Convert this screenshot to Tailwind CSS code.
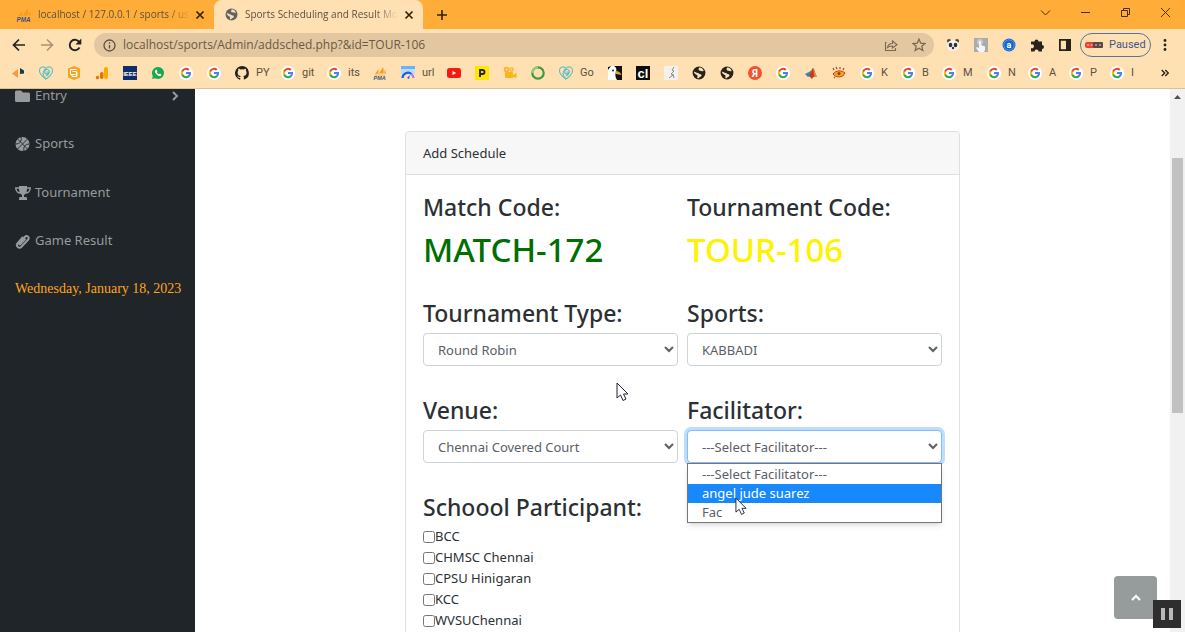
<!DOCTYPE html>
<html lang="en">
<head>
    <meta charset="UTF-8">
    <meta name="viewport" content="width=device-width, initial-scale=1.0">
    <title>Sports Scheduling and Result Monitoring</title>
    <script src="https://cdn.jsdelivr.net/npm/@tailwindcss/browser@4"></script>
</head>
<body class="flex flex-col h-screen overflow-hidden bg-white font-['Noto_Sans',sans-serif] text-[13px] text-[#2b3035]">

    <!-- Shared icons -->
    <svg class="hidden">
        <symbol id="google" viewBox="0 0 28 28">
            <circle cx="14" cy="14" r="14" fill="#fff"/>
            <g transform="translate(2.6 2.6) scale(.95)">
                <path fill="#4285f4" d="M22.6 12.2c0-.8-.1-1.5-.2-2.2H12v4.3h5.9a5 5 0 0 1-2.2 3.3v2.8h3.6c2.1-2 3.3-4.8 3.3-8.2z"/>
                <path fill="#34a853" d="M12 23c3 0 5.5-1 7.3-2.7l-3.6-2.7c-1 .7-2.2 1-3.7 1a6.5 6.5 0 0 1-6.2-4.5H2.2v2.8A11 11 0 0 0 12 23z"/>
                <path fill="#fbbc05" d="M5.8 14.1a6.6 6.6 0 0 1 0-4.2V7.1H2.2a11 11 0 0 0 0 9.9z"/>
                <path fill="#ea4335" d="M12 5.4c1.6 0 3.1.6 4.2 1.6l3.2-3.1A11 11 0 0 0 2.2 7.1l3.6 2.8A6.5 6.5 0 0 1 12 5.4z"/>
            </g>
        </symbol>
        <symbol id="globe" viewBox="0 0 24 24">
            <circle cx="12" cy="12" r="11" fill="currentColor"/>
            <path fill="#ffe0b2" d="M3 10c3-1 4 2 7 2 2 0 2 2 4 2s3 1 2 3-3 1-4 3-3 1-3 0 1-3 0-4-5-2-6-6zM12 3c3-1 6 1 8 5-2 2-4 0-6 0s-4-2-2-5z"/>
        </symbol>
        <symbol id="pma" viewBox="0 0 28 28">
            <path fill="#f89c1c" d="M12 15 20 2c1 5 2 9 1 13zM4 16 11 6v9zM22 15c2-2 1-5 0-8 3 3 4 5 4 8z"/>
            <path fill="#f5b564" d="M3 17h23l-3 2H5z"/>
            <text x="1" y="27" fill="#44507c" font-family="Liberation Sans" font-size="11" font-weight="700" font-style="italic">PMA</text>
        </symbol>
        <symbol id="heart" viewBox="0 0 28 28">
            <g fill="none" stroke="#5bbfc5" stroke-width="2.2">
                <path d="M14 26C5 20 0 14 1 8c1-7 9-8 13-3 4-5 12-4 13 3 1 6-4 12-13 18z"/>
                <path d="M14 26C5 18 7 10 14 5M14 20c8-4 9-12 3-13-5-1-8 7-3 9 4 0 5-2 5-4h-4"/>
            </g>
        </symbol>
        <symbol id="cross" viewBox="0 0 10 10">
            <path d="M1.5 1.5l7 7M8.5 1.5l-7 7" stroke="currentColor" stroke-width="1.7"/>
        </symbol>
        <symbol id="pointer" viewBox="0 0 14 20">
            <path fill="#fff" stroke="#223" d="M1 1v15l3.5-3 2.5 5.5 3-1.5-2.5-5h4.5z"/>
        </symbol>
    </svg>

    <!-- Browser window -->
    <header class="shrink-0 bg-[#ffe0b2] font-[Roboto,sans-serif] text-[11px] text-[#5c5040]">

        <!-- Tabs -->
        <div class="flex h-[29px] bg-[#ffad38]">
            <div class="flex items-center w-[214px] shrink-0 pl-4 pr-2">
                <svg class="size-4 mr-1.5 shrink-0"><use href="#pma"/></svg>
                <span class="w-[153px] mr-1 overflow-hidden whitespace-nowrap font-['Open_Sans',sans-serif] text-[10px] [mask-image:linear-gradient(to_right,#000_85%,transparent)]">localhost / 127.0.0.1 / sports / us</span>
                <button aria-label="Close tab" class="text-[#332200]"><svg class="size-2.5"><use href="#cross"/></svg></button>
            </div>
            <div class="flex items-center w-[209px] shrink-0 pl-[11px] pr-2 bg-[#ffe0b2] rounded-t-lg">
                <svg class="size-[13px] mr-[7px] shrink-0 text-[#5f6368]"><use href="#globe"/></svg>
                <span class="w-[153px] mr-1.5 overflow-hidden whitespace-nowrap font-['Open_Sans',sans-serif] text-[10px] [mask-image:linear-gradient(to_right,#000_85%,transparent)]">Sports Scheduling and Result Mo</span>
                <button aria-label="Close tab" class="text-[#332200]"><svg class="size-2.5"><use href="#cross"/></svg></button>
            </div>
            <button aria-label="New tab" class="px-[13px] text-[#332200]">
                <svg class="size-3" viewBox="0 0 12 12"><path d="M6 1v10M1 6h10" stroke="currentColor" stroke-width="1.6"/></svg>
            </button>
            <div class="flex items-center gap-[29px] ml-auto pr-[14px] pb-1 text-[#4a3000]">
                <button aria-label="Search tabs"><svg class="size-[11px]" viewBox="0 0 11 11" fill="none" stroke="currentColor"><path d="M1 3.5l4.5 4.5L10 3.5"/></svg></button>
                <button aria-label="Minimize"><svg class="size-[11px]" viewBox="0 0 11 11" stroke="currentColor"><path d="M1 5.5h9"/></svg></button>
                <button aria-label="Restore"><svg class="size-[11px]" viewBox="0 0 11 11" fill="none" stroke="currentColor"><path d="M1.5 3.5h6v6h-6zM3.5 3.5v-2h6v6h-2"/></svg></button>
                <button aria-label="Close"><svg class="size-[11px]" viewBox="0 0 11 11" stroke="currentColor"><path d="M1 1l9 9M10 1l-9 9"/></svg></button>
            </div>
        </div>

        <!-- Toolbar -->
        <div class="flex items-center h-8 pl-3 pr-[14px]">
            <button aria-label="Back" class="mr-[14px] text-[#222]"><svg class="size-[14px]" viewBox="0 0 14 14" fill="none" stroke="currentColor" stroke-width="1.7"><path d="M13 7H2M7 1.5 1.5 7 7 12.5"/></svg></button>
            <button aria-label="Forward" class="mr-[14px] text-[#a8926f]"><svg class="size-[14px]" viewBox="0 0 14 14" fill="none" stroke="currentColor" stroke-width="1.5"><path d="M1 7h11M7 1.5 12.5 7 7 12.5"/></svg></button>
            <button aria-label="Reload" class="mr-3 text-[#222]"><svg class="size-[14px]" viewBox="0 0 14 14" fill="none" stroke="currentColor" stroke-width="1.9"><path d="M11.5 9.5a5.2 5.2 0 1 1 0-5"/><path fill="currentColor" stroke="none" d="M13.3.5v6H7.5z"/></svg></button>
            <div class="flex items-center flex-1 h-6 pl-[9px] pr-2 rounded-full bg-[#e3c7a1]">
                <svg class="size-[13px] mr-[7px] shrink-0" viewBox="0 0 13 13" fill="none" stroke="#5c5040" stroke-width="1.3"><circle cx="6.5" cy="6.5" r="5.5"/><path d="M6.5 6v3.5M6.5 3.3v1.4"/></svg>
                <input type="text" aria-label="Address" value="localhost/sports/Admin/addsched.php?&amp;id=TOUR-106" class="flex-1 outline-none font-['Open_Sans',sans-serif] text-xs text-[#6b5a42]">
                <button aria-label="Share" class="mr-[14px]"><svg class="size-[14px]" viewBox="0 0 14 14" fill="none" stroke="#7a6850" stroke-width="1.1"><path d="M2.5 4.5h-1v8h10v-2.5M3.5 9.5c.5-3 2.5-4 5-4V3l4.5 3.8L8.5 10V8c-2 0-3.5 0-5 1.5z"/></svg></button>
                <button aria-label="Bookmark"><svg class="size-[14px]" viewBox="0 0 14 14" fill="none" stroke="#7a6850" stroke-width="1.3"><path d="M7 1.2l1.7 3.9 4.3.4-3.2 2.8 1 4.2L7 10.3l-3.8 2.2 1-4.2L1 5.5l4.3-.4z"/></svg></button>
            </div>
            <div class="flex items-center gap-[14px] ml-3">
                <svg class="size-[14px]" viewBox="0 0 14 14"><circle cx="3" cy="3" r="2" fill="#444"/><circle cx="11" cy="3" r="2" fill="#444"/><ellipse cx="7" cy="7.5" rx="6" ry="5.5" fill="#f2f2ee"/><ellipse cx="4.5" cy="7" rx="1.8" ry="2.2" fill="#333"/><ellipse cx="9.5" cy="7" rx="1.8" ry="2.2" fill="#333"/><circle cx="7" cy="10" r="1.2" fill="#333"/></svg>
                <svg class="size-[14px]" viewBox="0 0 14 14"><path fill="#a9abad" d="M0 0h14v14H0z"/><circle cx="6" cy="4" r="3" fill="#c9cacc"/><path fill="#f5f5f5" d="M5 3h2v4l4 1.5V12l-1 2H5l-3-4 1-1 2 1z"/></svg>
                <svg class="size-[14px]" viewBox="0 0 14 14"><circle cx="7" cy="7" r="6.5" fill="#1665d0"/><circle cx="7" cy="7" r="5.2" fill="none" stroke="#6ab0f5" stroke-width=".6"/><text x="7" y="10" text-anchor="middle" font-size="9" font-weight="700" fill="#fff">a</text></svg>
                <svg class="size-[14px]" viewBox="0 0 14 14" fill="#26221c"><path d="M1 3.5h3.5a2 2 0 1 1 4 0H12V7a2 2 0 1 1 0 4v2.5H8.5a2 2 0 1 0-4 0H1V10a2 2 0 1 0 0-3.5z"/></svg>
                <svg class="size-[14px]" viewBox="0 0 14 14" fill="#26221c"><path fill-rule="evenodd" d="M1 1h12v12H1zM2.8 2.8v8.4H8V2.8z"/></svg>
            </div>
            <button class="flex items-center gap-1.5 w-[71px] h-6 ml-2 mr-2 pl-1 rounded-full border border-[#5c719a] text-[#40568c] whitespace-nowrap">
                <svg class="w-[18px] h-2" viewBox="0 0 18 8"><rect width="10" height="6" y="1" rx="2" fill="#e8412f"/><rect x="8" y="1" width="10" height="6" rx="1" fill="#5a4844"/><path stroke="#fff" stroke-width=".8" d="M2 4h2M5.5 4h2M10 4h2M14 4h2"/></svg>
                Paused
            </button>
            <button aria-label="Menu"><svg class="w-3 h-[14px]" viewBox="0 0 12 14" fill="#26221c"><circle cx="6" cy="2.5" r="1.4"/><circle cx="6" cy="7" r="1.4"/><circle cx="6" cy="11.5" r="1.4"/></svg></button>
        </div>

        <!-- Bookmarks -->
        <nav class="flex items-center gap-[14px] h-7 pl-[11px] pr-4 pb-[3px] border-b border-[#d9c19c] whitespace-nowrap">
            <a href="#" aria-label="Bookmark"><svg class="size-[14px]" viewBox="0 0 14 14"><path fill="#f79b3e" d="M1 7.5 7 3v9z"/><path fill="#173c46" d="M9 2l4 2.5v3L9 8z"/></svg></a>
            <a href="#" aria-label="Bookmark"><svg class="size-[14px]"><use href="#heart"/></svg></a>
            <a href="#" aria-label="Bookmark"><svg class="size-[14px]" viewBox="0 0 14 14"><path fill="#f5a51d" d="M7 0l6 2.5v9L7 14l-6-2.5v-9z"/><path fill="none" stroke="#fff" d="M9.5 3.5h-6v5h6v-3h-4M5 8.5v2h5v-4"/></svg></a>
            <a href="#" aria-label="Analytics"><svg class="size-[14px]" viewBox="0 0 14 14"><rect x="9" y="1" width="4" height="12" rx="2" fill="#f9ab00"/><rect x="5" y="6" width="3.5" height="7" rx="1.7" fill="#e37400"/><circle cx="2.5" cy="11.5" r="1.7" fill="#e37400"/></svg></a>
            <a href="#" aria-label="IEEE"><svg class="size-[14px]" viewBox="0 0 14 14"><path fill="#0e2d69" d="M0 0h14v14H0z"/><text x="7" y="10" text-anchor="middle" font-family="Liberation Sans" font-size="6" font-weight="700" fill="#fff">IEEE</text></svg></a>
            <a href="#" aria-label="WhatsApp"><svg class="size-[14px]" viewBox="0 0 14 14"><path fill="#19a94c" d="M7 1a6 6 0 1 1-3 11.2L1 13l.8-3A6 6 0 0 1 7 1z"/><path fill="#fff" d="M4.5 4l1-.5.9 1.9-.6.9c.5 1 1 1.4 2 1.9l.9-.7 1.7.9c-.1 1.3-1.2 1.8-2.3 1.5C6 9.2 4.6 7.8 4 6c-.2-.8 0-1.5.5-2z"/></svg></a>
            <a href="#" aria-label="Google"><svg class="size-[14px]"><use href="#google"/></svg></a>
            <a href="#" aria-label="Google"><svg class="size-[14px]"><use href="#google"/></svg></a>
            <a href="#" class="flex items-center gap-[7px] w-8"><svg class="size-[14px] shrink-0" viewBox="0 0 16 16"><path fill="#24201c" d="M8 0a8 8 0 0 0-2.5 15.6c.4.1.5-.2.5-.4v-1.5c-2.2.5-2.7-1-2.7-1-.4-.9-.9-1.2-.9-1.2-.7-.5.1-.5.1-.5.8.1 1.2.8 1.2.8.7 1.3 1.9.9 2.4.7 0-.5.3-.9.5-1.1-1.8-.2-3.6-.9-3.6-4 0-.9.3-1.6.8-2.1-.1-.2-.4-1 .1-2.1 0 0 .7-.2 2.2.8a7.5 7.5 0 0 1 4 0c1.5-1 2.2-.8 2.2-.8.4 1.1.2 1.9.1 2.1.5.6.8 1.3.8 2.1 0 3.1-1.9 3.7-3.7 4 .3.3.6.7.6 1.5v2.2c0 .2.1.5.5.4A8 8 0 0 0 8 0z"/></svg>PY</a>
            <a href="#" class="flex items-center gap-[7px] w-8"><svg class="size-[14px] shrink-0"><use href="#google"/></svg>git</a>
            <a href="#" class="flex items-center gap-[7px] w-8"><svg class="size-[14px] shrink-0"><use href="#google"/></svg>its</a>
            <a href="#" aria-label="phpMyAdmin"><svg class="size-[14px]"><use href="#pma"/></svg></a>
            <a href="#" class="flex items-center gap-[7px] w-8"><svg class="size-[14px] shrink-0" viewBox="0 0 14 14"><path fill="#b9dcff" d="M0 0h14v8H0z"/><path fill="#6ab4f5" d="M0 0h14v3H0z"/><path fill="none" stroke="#1660f0" stroke-width="2.2" d="M1.5 12a5.5 5.5 0 0 1 9-4"/><path fill="none" stroke="#a07df0" stroke-width="2.2" d="M10.5 8a5.5 5.5 0 0 1 2 4"/><path fill="#1660f0" d="M6 12l3-3-1 4z"/></svg>url</a>
            <a href="#" aria-label="YouTube"><svg class="size-[14px]" viewBox="0 0 14 14"><rect y="2" width="14" height="10" rx="2.5" fill="#f51a10"/><path fill="#fff" d="M5.5 5v4L9.2 7z"/></svg></a>
            <a href="#" aria-label="Bookmark"><svg class="size-[14px]" viewBox="0 0 14 14"><path fill="#ffe500" d="M0 0h14v14H0z"/><path fill="none" stroke="#222" stroke-width="1.8" d="M5 11V4h2.5a2 2 0 0 1 0 4H5"/></svg></a>
            <a href="#" aria-label="Bookmark"><svg class="size-[14px]" viewBox="0 0 14 14" fill="#fbb321"><circle cx="3.5" cy="3.5" r="2.7"/><circle cx="8.5" cy="3.5" r="2.3"/><rect x="2" y="6" width="8" height="6" rx="1"/><path d="M10 9l3.500-2v5L10 11z"/><circle cx="3.5" cy="3.5" r="1" fill="#ffe0b2"/><circle cx="8.5" cy="3.5" r=".9" fill="#ffe0b2"/></svg></a>
            <a href="#" aria-label="Bookmark"><svg class="size-[14px]" viewBox="0 0 14 14" fill="none" stroke-width="2.2"><circle cx="7" cy="7" r="5.7" stroke="#3c9a3b"/><path stroke="#98ca80" d="M7 1.3a5.7 5.7 0 0 0-5.7 5.7"/></svg></a>
            <a href="#" class="flex items-center gap-[7px] w-[35px]"><svg class="size-[14px] shrink-0"><use href="#heart"/></svg>Go</a>
            <a href="#" aria-label="Bookmark"><svg class="size-[14px]" viewBox="0 0 14 14"><path fill="#fff" d="M0 0h14v14H0z"/><path fill="#111" d="M6 0h8v14H9C7 11 7 8 8 6 9 3 8 1 6 0zM0 1l3-1-3 4z"/><path fill="#f39a20" d="M7.5 5c3 0 5 1.5 6 4L8 8z"/><circle cx="5" cy="4.5" r=".9" fill="#111"/></svg></a>
            <a href="#" aria-label="Bookmark"><svg class="size-[14px]" viewBox="0 0 14 14"><path fill="#0c0c0c" d="M0 0h14v14H0z"/><text x="7" y="11.5" text-anchor="middle" font-family="Liberation Sans" font-size="13" font-weight="700" fill="#fff">cl</text></svg></a>
            <a href="#" aria-label="Bookmark"><svg class="size-[14px]" viewBox="0 0 14 14"><path fill="#f4f2ef" d="M0 0h14v14H0z"/><path fill="none" stroke="#8c8883" d="M10 1 8 4l2 1-3 3 2 1-4 3M9 8l1 4"/></svg></a>
            <a href="#" aria-label="Bookmark"><svg class="size-[14px] text-[#26221c]"><use href="#globe"/></svg></a>
            <a href="#" aria-label="Bookmark"><svg class="size-[14px] text-[#26221c]"><use href="#globe"/></svg></a>
            <a href="#" aria-label="Yandex"><svg class="size-[14px]" viewBox="0 0 14 14"><circle cx="7" cy="7" r="7" fill="#f4512c"/><text x="7" y="10.5" text-anchor="middle" font-size="10" font-weight="700" fill="#fff">Я</text></svg></a>
            <a href="#" aria-label="Google"><svg class="size-[14px]"><use href="#google"/></svg></a>
            <a href="#" aria-label="Matlab"><svg class="size-[14px]" viewBox="0 0 14 14"><path fill="#3c7fc0" d="M1 8l4-2 3-2-2 6-2 1z"/><path fill="#c23b22" d="M5 10C7 7 8 2 9 2s2 5 4 9c-3-1-4 0-5 2z"/><path fill="#f08a24" d="M9 2c1 0 2 5 4 9-2-1-3-1-3-3z"/></svg></a>
            <a href="#" aria-label="Bookmark"><svg class="size-[14px]" viewBox="0 0 14 14"><path fill="#f5a51d" stroke="#c8410f" d="M1 8c3-4 9-4 12-1-2 5-9 5-12 1z"/><path stroke="#c8410f" stroke-width="1.2" d="M2 4 1 2M5 3 4 1M8 3V1M11 4l1-2M3 11l-1 1"/><circle cx="7" cy="7.5" r="1.5" fill="#9e2c0b"/></svg></a>
            <a href="#" class="flex items-center gap-[7px] w-[27px]"><svg class="size-[14px] shrink-0"><use href="#google"/></svg>K</a>
            <a href="#" class="flex items-center gap-[7px] w-[27px]"><svg class="size-[14px] shrink-0"><use href="#google"/></svg>B</a>
            <a href="#" class="flex items-center gap-[7px] w-[31px]"><svg class="size-[14px] shrink-0"><use href="#google"/></svg>M</a>
            <a href="#" class="flex items-center gap-[7px] w-[27px]"><svg class="size-[14px] shrink-0"><use href="#google"/></svg>N</a>
            <a href="#" class="flex items-center gap-[7px] w-[27px]"><svg class="size-[14px] shrink-0"><use href="#google"/></svg>A</a>
            <a href="#" class="flex items-center gap-[7px] w-[27px]"><svg class="size-[14px] shrink-0"><use href="#google"/></svg>P</a>
            <a href="#" class="flex items-center gap-[7px] w-[27px]"><svg class="size-[14px] shrink-0"><use href="#google"/></svg>I</a>
            <button aria-label="More bookmarks" class="ml-auto"><svg class="size-2" viewBox="0 0 8 8" fill="none" stroke="#26221c" stroke-width="1.4"><path d="M.7 1l3 3-3 3M4.3 1l3 3-3 3"/></svg></button>
        </nav>
    </header>

    <div class="flex flex-1 min-h-0">

        <!-- Sidebar -->
        <aside class="w-[195px] shrink-0 overflow-hidden bg-[#1f2528] text-[#989b9d]">
            <nav class="-mt-[18px] px-[15px]">
                <a href="#" class="flex items-center gap-1 h-[49px]">
                    <svg class="size-4 shrink-0" viewBox="0 0 16 16" fill="currentColor"><path d="M0 4a1.5 1.5 0 0 1 1.5-1.5H6l2 2h5.5A1.5 1.5 0 0 1 15 6v6.5a1.5 1.5 0 0 1-1.5 1.5h-12A1.5 1.5 0 0 1 0 12.5z"/></svg>
                    Entry
                    <svg class="size-2.5 ml-auto" viewBox="0 0 10 10" fill="none" stroke="currentColor" stroke-width="2"><path d="M3 1l4 4-4 4"/></svg>
                </a>
                <a href="#" class="flex items-center gap-1 h-12">
                    <svg class="size-4 shrink-0" viewBox="0 0 16 16"><circle cx="7.5" cy="8" r="7" fill="currentColor"/><path fill="none" stroke="#1f2528" stroke-width=".9" d="M2.5 3l10 10M12.5 3l-10 10M6 1c1 4-1 7-5.500 7M9 15c-1-4 1-7 5.500-7"/></svg>
                    Sports
                </a>
                <a href="#" class="flex items-center gap-1 h-[49px]">
                    <svg class="size-4 shrink-0" viewBox="0 0 16 16"><path fill="currentColor" d="M4 1h8v3c0 3-1 5-3 6v2h2c1 0 1 1 1 3H4c0-2 0-3 1-3h2v-2C5 9 4 7 4 4z"/><path fill="none" stroke="currentColor" stroke-width="1.5" d="M4 3H.8C.8 6 3 8 5.5 8M12 3h3.200C15.200 6 13 8 10.500 8"/></svg>
                    Tournament
                </a>
                <a href="#" class="flex items-center gap-1 h-12">
                    <svg class="size-4 shrink-0" viewBox="0 0 16 16" fill="none" stroke="currentColor" stroke-width="2"><path d="M10.5 5.5 5.5 11c-.8.9-2-.2-1.2-1.2l5.7-6c2-2 5 .5 3 3l-6.5 7c-2.5 2.5-6-1-4-3.5L8 4"/></svg>
                    Game Result
                </a>
                <p class="h-12 leading-[48px] whitespace-nowrap font-['Liberation_Serif',serif] text-[14px] text-[#ffa41c]">Wednesday, January 18, 2023</p>
            </nav>
        </aside>

        <!-- Add schedule form -->
        <main class="relative flex-1 overflow-hidden pt-[42px]">
            <form class="max-w-[555px] mx-auto pb-8 border border-[#dfdfdf] rounded">
                <div class="px-[17px] h-[43px] leading-[42px] rounded-t bg-[#f7f7f7] border-b border-[#dfdfdf]">Add Schedule</div>
                <div class="grid grid-cols-2 gap-x-[9px] gap-y-[29px] px-[17px] pt-[17px]">
                    <div>
                        <h3 class="mb-[9px] text-[23px] leading-[30px] font-medium">Match Code:</h3>
                        <h1 class="text-[33px] leading-[38px] font-medium text-[#006f00]">MATCH-172</h1>
                    </div>
                    <div>
                        <h3 class="mb-[9px] text-[23px] leading-[30px] font-medium">Tournament Code:</h3>
                        <h1 class="text-[33px] leading-[38px] font-medium text-[#fff200]">TOUR-106</h1>
                    </div>
                    <div>
                        <label for="tournamentType" class="block mb-[5px] text-[23px] leading-[30px] font-medium">Tournament Type:</label>
                        <select id="tournamentType" class="block w-full h-[33px] px-2.5 rounded border border-[#ced4da] bg-white text-[#5a6067]">
                            <option>Round Robin</option>
                        </select>
                    </div>
                    <div>
                        <label for="sports" class="block mb-[5px] text-[23px] leading-[30px] font-medium">Sports:</label>
                        <select id="sports" class="block w-full h-[33px] px-2.5 rounded border border-[#ced4da] bg-white text-[#5a6067]">
                            <option>KABBADI</option>
                        </select>
                    </div>
                    <div>
                        <label for="venue" class="block mb-[5px] text-[23px] leading-[30px] font-medium">Venue:</label>
                        <select id="venue" class="block w-full h-[33px] px-2.5 rounded border border-[#ced4da] bg-white text-[#5a6067]">
                            <option>Chennai Covered Court</option>
                        </select>
                    </div>
                    <div class="relative">
                        <label for="facilitator" class="block mb-[5px] text-[23px] leading-[30px] font-medium">Facilitator:</label>
                        <select id="facilitator" class="block w-full h-[33px] px-2.5 rounded border border-[#80bdff] ring-3 ring-[#bfdeff] bg-white text-[#5a6067]">
                            <option>---Select Facilitator---</option>
                            <option>angel jude suarez</option>
                            <option>Fac</option>
                        </select>
                        <!-- Open option list -->
                        <ul class="absolute top-full inset-x-0 z-10 pt-px bg-white border border-[#767676] shadow-md text-[#5a6067] leading-[19px]">
                            <li class="px-[14px]">---Select Facilitator---</li>
                            <li class="px-[14px] bg-[#1789fc] text-white">angel jude suarez</li>
                            <li class="px-[14px]">Fac</li>
                        </ul>
                        <svg class="absolute left-12 top-[102px] z-20 w-[13px] h-[19px]"><use href="#pointer"/></svg>
                    </div>
                    <fieldset>
                        <legend class="mb-1 text-[23px] leading-[30px] font-medium whitespace-nowrap">Schoool Participant:</legend>
                        <label class="flex items-center h-[21px]"><input type="checkbox" class="size-3">BCC</label>
                        <label class="flex items-center h-[21px]"><input type="checkbox" class="size-3">CHMSC Chennai</label>
                        <label class="flex items-center h-[21px]"><input type="checkbox" class="size-3">CPSU Hinigaran</label>
                        <label class="flex items-center h-[21px]"><input type="checkbox" class="size-3">KCC</label>
                        <label class="flex items-center h-[21px]"><input type="checkbox" class="size-3">WVSUChennai</label>
                    </fieldset>
                </div>
            </form>

            <svg class="absolute left-[421px] top-[293px] w-[14px] h-5"><use href="#pointer"/></svg>

            <button aria-label="Back to top" class="absolute right-[13px] bottom-[13px] flex items-center justify-center size-[43px] rounded bg-[#969b9b]">
                <svg class="size-2.5" viewBox="0 0 10 10" fill="none" stroke="#fff" stroke-width="2.2"><path d="M1 7l4-4 4 4"/></svg>
            </button>
        </main>

        <!-- Scrollbar -->
        <div class="flex flex-col items-center w-[15px] shrink-0 bg-[#f1f1f1]">
            <svg class="w-[7px] h-4 shrink-0" viewBox="0 0 7 16"><path fill="#505050" d="M0 10h7L3.5 6z"/></svg>
            <div class="w-[11px] h-[47%] mt-[53px] bg-[#c1c1c1]"></div>
        </div>
    </div>

    <!-- Recorder pause button -->
    <button aria-label="Pause" class="fixed right-1 bottom-1 z-30 flex items-center justify-center gap-1 size-7 bg-[#2e2e2e]">
        <span class="w-1 h-3 bg-[#b9b9b9]"></span>
        <span class="w-1 h-3 bg-[#b9b9b9]"></span>
    </button>
</body>
</html>
